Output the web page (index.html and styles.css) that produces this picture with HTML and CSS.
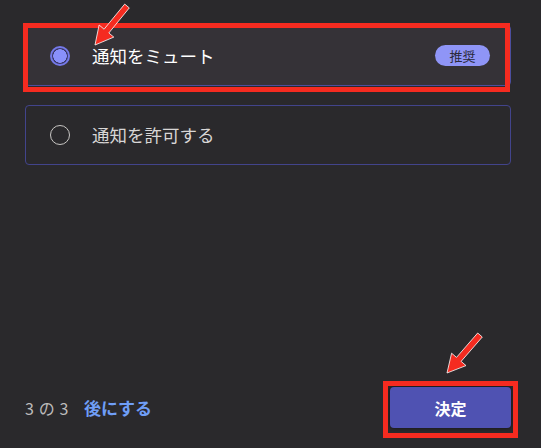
FILE: index.html
```html
<!DOCTYPE html>
<html lang="ja">
<head>
<meta charset="utf-8">
<link rel="stylesheet" href="styles.css">
</head>
<body>
<div class="page">
  <div class="options">
    <div class="option selected">
      <span class="radio on"></span>
      <span class="label">通知をミュート</span>
      <span class="badge">推奨</span>
    </div>
    <div class="option">
      <span class="radio"></span>
      <span class="label">通知を許可する</span>
    </div>
  </div>
  <div class="footer">
    <span class="count">3 の 3</span>
    <span class="later">後にする</span>
    <button class="confirm">決定</button>
  </div>
  <div class="mark mark-option"></div>
  <div class="mark mark-button"></div>
  <svg class="arrows" width="541" height="448" viewBox="0 0 541 448">
    <polygon points="124.7,4.1 104.1,29.2 99.1,25.0 95,45 113.8,37.1 108.8,33.0 129.3,7.9" />
    <polygon points="477.7,333.0 456.5,357.4 451.6,353.2 447,373 466.0,365.6 461.1,361.4 482.3,337.0" />
  </svg>
</div>
</body>
</html>
```
FILE: styles.css
```css
html, body {
  margin: 0;
  padding: 0;
  background: #2a292c;
}
body {
  font-family: "Noto Sans CJK JP", "Noto Sans", sans-serif;
}
.page {
  position: relative;
  width: 541px;
  height: 448px;
  box-sizing: border-box;
  padding: 25px 30px 20px 25px;
  display: flex;
  flex-direction: column;
  overflow: hidden;
}
.options {
  display: flex;
  flex-direction: column;
  gap: 20px;
}
.option {
  height: 60px;
  box-sizing: border-box;
  border: 1px solid #42448c;
  border-radius: 4px;
  display: flex;
  align-items: center;
  padding: 0 20px 0 24px;
}
.option.selected {
  height: 61px;
  background: #353237;
  border-color: #4b4e9e;
}
.options .option + .option {
  margin-top: -1px;
}
.radio {
  width: 20px;
  height: 20px;
  box-sizing: border-box;
  border-radius: 50%;
  border: 1.5px solid #c8c6c4;
  flex: none;
}
.radio.on {
  border: 2px solid #7479e8;
  background: radial-gradient(circle, #8990fb 0 6.5px, #3a3766 7px, #3a3766 100%);
}
.label {
  margin-left: 22px;
  font-size: 17.5px;
  color: #d8d6d6;
  line-height: 24px;
}
.selected .label {
  color: #ffffff;
}
.badge {
  margin-left: auto;
  width: 55px;
  height: 21px;
  border-radius: 11px;
  background: #8f95f7;
  color: #2a2a3a;
  font-size: 13px;
  line-height: 21px;
  text-align: center;
}
.footer {
  margin-top: auto;
  display: flex;
  align-items: center;
}
.count {
  font-size: 16px;
  color: #bdbbbb;
  letter-spacing: 0.6px;
}
.later {
  margin-left: 15px;
  font-size: 17px;
  font-weight: bold;
  color: #6f9ef7;
}
.confirm {
  margin-left: auto;
  width: 121px;
  height: 41px;
  border: none;
  border-radius: 4px;
  background: #4f52b2;
  color: #ffffff;
  font-family: "Noto Sans CJK JP", sans-serif;
  font-size: 16px;
  font-weight: bold;
  box-shadow: 0 0 3px 1px #1c1b1e;
}
.mark {
  position: absolute;
  box-sizing: border-box;
  border: 5px solid #f52b20;
  pointer-events: none;
}
.mark-option {
  left: 23px;
  top: 23px;
  width: 487px;
  height: 69px;
}
.mark-button {
  left: 383px;
  top: 381px;
  width: 135px;
  height: 57px;
}
.arrows {
  position: absolute;
  left: 0;
  top: 0;
  pointer-events: none;
}
.arrows polygon {
  fill: #f52b20;
  stroke: #ffffff;
  stroke-width: 0.8;
  stroke-linejoin: miter;
}
```
